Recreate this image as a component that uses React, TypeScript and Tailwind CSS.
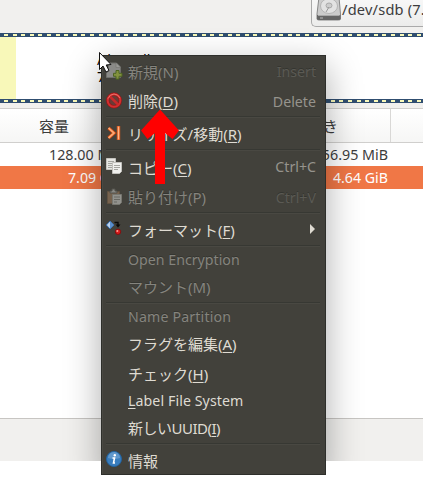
import React from 'react';

function NewIcon() {
  return (
    <svg width="18" height="18" viewBox="0 0 18 18" className="block">
      <path d="M2.5 1h8l4 4v10.5h-14V11l2-2z" fill="#8a8a87" stroke="#6f6f6b" />
      <path d="M10 1v4.5h4.5" fill="#999995" stroke="#72726e" strokeWidth=".6" />
      <path d="M10 8.5h3v2.8h3v3h-3v2.8h-3v-2.8H7.500v-3H10z" fill="#83923f" stroke="#4d6422" />
    </svg>
  );
}

function DeleteIcon() {
  return (
    <svg width="18" height="18" viewBox="0 0 18 18" className="block">
      <circle cx="8" cy="8.500" r="6.3" fill="#6b3a36" stroke="#981616" strokeWidth="3.2" />
      <circle cx="8" cy="8.500" r="6.3" fill="none" stroke="#d23030" strokeWidth="2" />
      <path d="M3.800 4.300l8.400 8.400" stroke="#c92a2a" strokeWidth="2.600" />
      <path d="M2 6.500Q4 2 8 2q4 0 6 4" fill="none" stroke="#ee7770" strokeWidth=".9" />
    </svg>
  );
}

function ResizeIcon() {
  return (
    <svg width="18" height="18" viewBox="0 0 18 18" className="block">
      <path d="M2.500 4l5.500 5-5.500 5" fill="none" stroke="#c0440f" strokeWidth="3.600" />
      <path d="M2.500 4l5.500 5-5.500 5" fill="none" stroke="#ffa873" strokeWidth="1.800" />
      <path d="M12.500 2v14" stroke="#d9571c" strokeWidth="3.400" />
      <path d="M12.500 2.500v13" stroke="#ffb486" strokeWidth="1.500" />
    </svg>
  );
}

function CopyIcon() {
  return (
    <svg width="18" height="18" viewBox="0 0 18 18" className="block">
      <path d="M.5 1.500h9v11h-9z" fill="#e6e6e2" stroke="#c4c3be" />
      <path d="M2 4.500h6M2 6.500h4M2 8.500h4M2 10.500h4" stroke="#a5a5a0" />
      <path d="M6.500 5.500h9v9l-2 2h-7z" fill="#f0f0ed" stroke="#c2c1bc" />
      <path d="M8 8.500h6M8 10.500h6M8 12.500h4" stroke="#a5a5a0" />
    </svg>
  );
}

function PasteIcon() {
  return (
    <svg width="18" height="18" viewBox="0 0 18 18" className="block">
      <path d="M1.500 3.500h12v12h-12z" fill="#76624e" stroke="#615241" />
      <path d="M4 5V3h2V1h3v2h2v2z" fill="#888883" stroke="#52524d" />
      <path d="M6.500 6.500h9v8l-2 2h-7z" fill="#92928d" stroke="#777770" />
      <path d="M8 9h6M8 11.500h6M8 14h3" stroke="#686862" />
    </svg>
  );
}

function FormatIcon() {
  return (
    <svg width="18" height="18" viewBox="0 0 18 18" className="block">
      <path d="M4 1l3.800 4L4 9 .300 5z" fill="#bcd3ed" stroke="#2d64a5" />
      <path d="M4 1l3.800 4L4 9z" fill="#5b8ecb" />
      <path d="M8.500 2.500H12V5" fill="none" stroke="#090909" strokeWidth="1.400" />
      <path d="M9.500 4.500h5L12 7.500z" fill="#090909" />
      <circle cx="12" cy="11.800" r="2.700" fill="#d91c1c" stroke="#811010" />
      <circle cx="11.300" cy="10.900" r="1" fill="#ff9c91" />
    </svg>
  );
}

function InfoIcon() {
  return (
    <svg width="18" height="18" viewBox="0 0 18 18" className="block">
      <circle cx="8" cy="9" r="7.500" fill="#397dbd" stroke="#23639f" />
      <path d="M2 8a6 6 0 0112 0q-6 2-12 0" fill="#6098cc" />
      <path d="M6.500 8h2l-1 5H9" fill="none" stroke="#fff" strokeWidth="1.600" />
      <circle cx="8.800" cy="5.200" r="1.200" fill="#fff" />
    </svg>
  );
}

type ItemProps = {
  h: string;
  label: string;
  keyName?: string;
  after?: string;
  shortcut?: string;
  disabled?: boolean;
  icon?: React.ReactNode;
  text?: string;
  arrow?: boolean;
};

function Item({ h, label, keyName, after = ')', shortcut, disabled, icon, text = 'text-[15px]', arrow }: ItemProps) {
  return (
    <div className={`flex shrink-0 items-center pr-[9px] pl-1 ${h} ${disabled ? 'text-[#85847e] [text-shadow:0_-1px_#343530]' : 'text-[#dfdbd2]'}`}>
      <span className="w-[22px] shrink-0 pb-[2px]">{icon}</span>
      <span className={`whitespace-pre ${text}`}>
        {label}
        {keyName && <span className={disabled ? '' : 'underline decoration-1 underline-offset-2'}>{keyName}</span>}
        {keyName && after}
      </span>
      {shortcut && <span className={`ml-auto pt-px ${disabled ? 'text-[#5b5a54]' : 'text-[#96948d]'}`}>{shortcut}</span>}
      {arrow && <span className="mr-[1px] mb-[2px] ml-auto h-0 w-0 border-y-[5px] border-l-[5px] border-y-transparent border-l-[#dfdbd2]" />}
    </div>
  );
}

function Sep() {
  return <div className="mr-[5px] ml-1 h-[2px] shrink-0 border-t border-b border-t-[#373833] border-b-[#494842]" />;
}

function Dashes() {
  return (
    <div className="h-1 shrink-0 bg-[#304e70] pt-px">
      <div className="h-[2px] bg-[repeating-linear-gradient(90deg,#304e70_0_4px,#f9f9b9_4px_8px,#304e70_8px_8.6px)]" />
    </div>
  );
}

function Disk() {
  return (
    <svg width="26" height="24" viewBox="0 0 26 24" className="-mt-[3px] shrink-0">
      <path d="M3 0h20l1.500 17v5q0 1-2 1H3q-2 0-2-1v-5z" fill="#ccc" stroke="#888" />
      <path d="M1 18h23.500v4q0 1-2 1H3q-2 0-2-1z" fill="#666" />
      <path d="M2 18.500h21.500" stroke="#aaa" />
      <ellipse cx="13" cy="9" rx="8.500" ry="7.500" fill="#e2e2e2" stroke="#b5b5b5" />
      <ellipse cx="13" cy="8.500" rx="3" ry="2.500" fill="#ccc" stroke="#aaa" />
      <path d="M10 15l3-5" stroke="#999" />
      <path d="M4 21h3" stroke="#bbb" />
    </svg>
  );
}

const latin = 'text-[14.2px]';

export default function App() {
  return (
    <div className="relative h-[481px] w-[423px] overflow-hidden bg-white font-['Noto_Sans','Noto_Sans_CJK_JP',sans-serif] text-[14.2px] leading-none text-[#3c3c3c]">
      <div className="relative flex h-[461px] flex-col overflow-hidden bg-white">
        <div className="flex h-[33px] shrink-0 items-start justify-end bg-[#f1f0ee]">
          <div className="flex h-[27px] w-[112px] items-start overflow-hidden rounded-bl-[5px] border-b border-l border-[#aaa] bg-gradient-to-b from-[#f7f7f7] to-[#ececeb] pl-1">
            <Disk />
            <span className="pt-[2px] text-[14.6px] tracking-[0.2px] whitespace-nowrap">/dev/sdb (7.2</span>
          </div>
        </div>
        <Dashes />
        <div className="flex h-[62px] shrink-0 bg-white">
          <div className="w-4 bg-[#f8f8b9]" />
          <div className="pt-[16px] pl-[81px] text-black">
            <div>/dev/sdb2</div>
            <div className="pt-[3px]">7.09 GiB</div>
          </div>
        </div>
        <Dashes />
        <div className="h-[5px] shrink-0 bg-[#f1f0ee]" />
        <div className="flex h-[35px] shrink-0 items-center border-y border-[#d0cfcd] bg-gradient-to-b from-white to-[#f6f6f5]">
          <span className="w-[308px] pt-[2px] pl-[39px] text-[15px]">容量</span>
          <span className="w-[82px] pt-[2px] text-[15px]">空き</span>
          <span className="h-[33px] w-px bg-[#d9d8d6]" />
        </div>
        <div className="flex h-[23px] shrink-0 items-center justify-between pt-[2px] pr-[35px] pl-[49px] text-[14.3px]">
          <span>128.00 MiB</span><span>156.95 MiB</span>
        </div>
        <div className="flex h-[23px] shrink-0 items-center justify-between bg-[#f07746] pt-[2px] pr-[35px] pl-[68px] text-white">
          <span>7.09 GiB</span><span>4.64 GiB</span>
        </div>
        <div className="h-[229px] shrink-0" />
        <div className="h-[43px] shrink-0 border-t border-[#c7c5c2] bg-[#f1f0ee]" />
        <div className="absolute top-[55px] left-[101px] h-[420px] w-[225px] shadow-[0_12px_34px_rgba(0,0,0,0.33)]" />
      </div>
      <div className="absolute top-[55px] left-[101px] flex h-[420px] w-[225px] flex-col border border-[#2e2f2b] bg-[#42413b] pt-px shadow-[inset_1px_0_#4a4943]">
        <Item h="h-[30px]" label="新規(N)" shortcut="Insert" icon={<NewIcon />} disabled text="text-[15px]" />
        <Item h="h-[29px]" label="削除(" keyName="D" shortcut="Delete" icon={<DeleteIcon />} />
        <Sep />
        <Item h="h-[31px]" label="リサイズ/移動(" keyName="R" icon={<ResizeIcon />} text="text-[15px] pt-px" />
        <Sep />
        <Item h="h-[32px]" label="コピー(" keyName="C" shortcut="Ctrl+C" icon={<CopyIcon />} text="text-[15px] pt-[2px]" />
        <Item h="h-[29px]" label="貼り付け(P)" shortcut="Ctrl+V" icon={<PasteIcon />} disabled />
        <Sep />
        <Item h="h-[31px]" label="フォーマット(" keyName="F" icon={<FormatIcon />} text="text-[15px] pt-[2px]" arrow />
        <Sep />
        <Item h="h-[27px]" label="Open Encryption" disabled text={latin} />
        <Item h="h-[28px]" label="マウント(M)" disabled text="text-[15px] pb-px" />
        <Sep />
        <Item h="h-[26px]" label="Name Partition" disabled text="text-[14.2px] tracking-[0.15px]" />
        <Item h="h-[29px]" label="フラグを編集(" keyName="A" />
        <Item h="h-[29px]" label="チェック(" keyName="H" text="text-[15px] pt-px" />
        <Item h="h-[26px]" label="" keyName="L" after="abel File System" text="text-[14.2px] tracking-[0.08px]" />
        <Item h="h-[29px]" label="新しいUUID(" keyName="I" text="text-[15px] tracking-[-0.5px]" />
        <Sep />
        <Item h="h-[29px]" label="情報" icon={<InfoIcon />} text="text-[15px] pt-[4px]" />
      </div>
      <svg width="423" height="481" viewBox="0 0 423 481" className="pointer-events-none absolute top-0 left-0">
        <path d="M99.500 52.500v17l3.500-3.500 3 6 3-1.500-2.800-5.500 4.800-.5z" fill="#fff" stroke="#111" strokeWidth="1" />
        <path d="M160 109.500l19 21-6.500 8.500-7.500-6v51h-10v-51l-7.500 6-6.500-8.500z" fill="#f00" />
      </svg>
    </div>
  );
}
